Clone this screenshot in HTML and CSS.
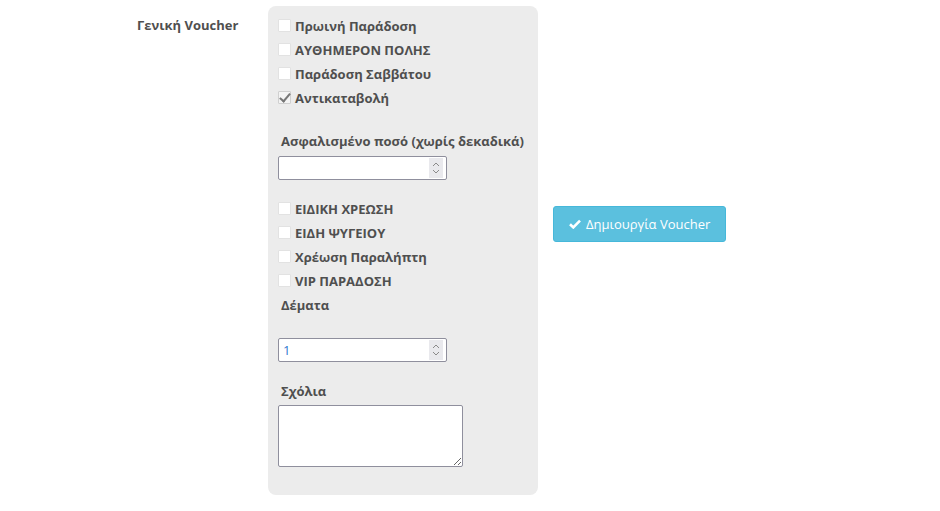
FILE: index.html
```html
<!DOCTYPE html>
<html lang="en">
<head>
    <meta charset="UTF-8">
    <title>Voucher</title>
    <link rel="stylesheet" href="styles.css">
</head>
<body>
    <div class="form-row">
        <div class="row-label">Γενική Voucher</div>

        <div class="panel">
            <label class="check"><input type="checkbox" class="cb"> Πρωινή Παράδοση</label>
            <label class="check"><input type="checkbox" class="cb"> ΑΥΘΗΜΕΡΟΝ ΠΟΛΗΣ</label>
            <label class="check"><input type="checkbox" class="cb"> Παράδοση Σαββάτου</label>
            <label class="check"><input type="checkbox" class="cb" checked> Αντικαταβολή</label>

            <div class="field-label insured">Ασφαλισμένο ποσό (χωρίς δεκαδικά)</div>
            <div class="num-input">
                <input type="text" class="num-value" value="">
                <span class="spin">
                    <svg width="8" height="14" viewBox="0 0 8 14"><path d="M1 5 L4 2 L7 5 M1 9 L4 12 L7 9" fill="none" stroke="#8a8a8a" stroke-width="1"/></svg>
                </span>
            </div>

            <div class="group">
                <label class="check"><input type="checkbox" class="cb"> ΕΙΔΙΚΗ ΧΡΕΩΣΗ</label>
                <label class="check"><input type="checkbox" class="cb"> ΕΙΔΗ ΨΥΓΕΙΟΥ</label>
                <label class="check"><input type="checkbox" class="cb"> Χρέωση Παραλήπτη</label>
                <label class="check"><input type="checkbox" class="cb"> VIP ΠΑΡΑΔΟΣΗ</label>
                <div class="field-label parcels">Δέματα</div>
            </div>

            <div class="num-input parcels-input">
                <input type="text" class="num-value blue" value="1">
                <span class="spin">
                    <svg width="8" height="14" viewBox="0 0 8 14"><path d="M1 5 L4 2 L7 5 M1 9 L4 12 L7 9" fill="none" stroke="#8a8a8a" stroke-width="1"/></svg>
                </span>
            </div>

            <div class="field-label comments">Σχόλια</div>
            <textarea class="notes"></textarea>
        </div>

        <button type="button" class="btn-voucher">
            <svg width="12" height="10" viewBox="0 0 12 10"><path d="M1 5.2 L4.3 8.4 L11 1.6" fill="none" stroke="#fff" stroke-width="2.6"/></svg>
            Δημιουργία Voucher
        </button>
    </div>
</body>
</html>
```

FILE: styles.css
```css
body {
    margin: 0;
    font-family: "Open Sans", Arial, sans-serif;
    font-size: 13px;
    color: #4f4f4f;
    background: #fff;
}
.form-row {
    display: flex;
    align-items: flex-start;
    padding: 6px 0 0 137px;
}
.row-label {
    width: 131px;
    font-weight: bold;
    line-height: 20px;
    margin-top: 9px;
}
.panel {
    width: 260px;
    background: #ececec;
    border-radius: 8px;
    padding: 8px 0 28px 10px;
    display: flex;
    flex-direction: column;
    align-items: flex-start;
}
.check {
    display: flex;
    align-items: center;
    height: 24px;
    font-weight: bold;
    gap: 4px;
}
.cb {
    appearance: none;
    -webkit-appearance: none;
    width: 13px;
    height: 13px;
    margin: -2px 0 0 0;
    background: #fff;
    border: 1px solid #e2e2e2;
    border-radius: 1px;
    position: relative;
}
.cb:checked {
    background: #f4f4f4;
    border-color: #d0d0d0;
}
.cb:checked::before {
    content: "";
    position: absolute;
    left: 3px;
    top: -1px;
    width: 4px;
    height: 9px;
    border-right: 2px solid #777;
    border-bottom: 2px solid #777;
    transform: rotate(40deg);
}
.field-label {
    font-weight: bold;
    line-height: 20px;
    padding-left: 3px;
}
.insured {
    margin-top: 21px;
}
.num-input {
    display: flex;
    align-items: center;
    width: 167px;
    height: 22px;
    margin-top: 5px;
    background: #fff;
    border: 1px solid #8f8f9d;
    border-radius: 2px;
}
.num-value {
    flex: 1;
    min-width: 0;
    border: none;
    outline: none;
    background: transparent;
    font-family: "Open Sans", Arial, sans-serif;
    font-size: 13px;
    padding: 0 4px;
    color: #555;
}
.num-value.blue {
    color: #2f7bd0;
}
.spin {
    width: 14px;
    height: 20px;
    margin-right: 3px;
    background: #e9e9ed;
    display: flex;
    align-items: center;
    justify-content: center;
}
.group {
    margin-top: 17px;
    display: flex;
    flex-direction: column;
}
.parcels {
    line-height: 24px;
}
.parcels-input {
    margin-top: 21px;
}
.comments {
    margin-top: 19px;
}
.notes {
    width: 181px;
    height: 58px;
    margin-top: 4px;
    padding: 1px;
    border: 1px solid #8f8f9d;
    border-radius: 2px;
    background: #fff;
    font-family: "Open Sans", Arial, sans-serif;
}
.btn-voucher {
    margin: 200px 0 0 15px;
    height: 36px;
    padding: 0 15px 0 15px;
    background: #5bc0de;
    border: 1px solid #46b8da;
    border-radius: 3px;
    color: #fff;
    font-family: "Open Sans", Arial, sans-serif;
    font-size: 13px;
    display: flex;
    align-items: center;
    gap: 5px;
    cursor: pointer;
}
```
